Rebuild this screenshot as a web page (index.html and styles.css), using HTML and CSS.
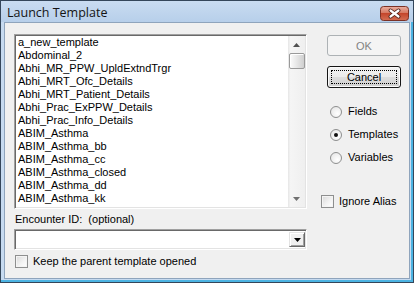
FILE: index.html
```html
<!DOCTYPE html>
<html lang="en">
<head>
  <meta charset="UTF-8" />
  <title>Launch Template</title>
  <link rel="stylesheet" href="styles.css">
</head>
<body>
  <div class="window">
    <div class="titlebar">
      <span class="title">Launch Template</span>
      <span class="close">
        <svg width="29" height="15" viewBox="0 0 29 15">
          <defs>
            <linearGradient id="closeGrad" x1="0" y1="0" x2="0" y2="1">
              <stop offset="0" stop-color="#eab0a2"/>
              <stop offset="0.45" stop-color="#d67a63"/>
              <stop offset="0.5" stop-color="#c4462c"/>
              <stop offset="1" stop-color="#d47055"/>
            </linearGradient>
          </defs>
          <rect x="0.5" y="0.5" width="28" height="14" rx="3" fill="url(#closeGrad)" stroke="#7b3226"/>
          <path d="M10.5 4.5 L18.5 10.5 M18.5 4.5 L10.5 10.5" stroke="#4a1e16" stroke-width="4" stroke-linecap="round"/>
          <path d="M10.5 4.5 L18.5 10.5 M18.5 4.5 L10.5 10.5" stroke="#fff" stroke-width="2.2" stroke-linecap="round"/>
        </svg>
      </span>
    </div>
    <div class="client">
      <div class="left-col">
        <div class="listbox">
          <ul class="items">
            <li>a_new_template</li>
            <li>Abdominal_2</li>
            <li>Abhi_MR_PPW_UpldExtndTrgr</li>
            <li>Abhi_MRT_Ofc_Details</li>
            <li>Abhi_MRT_Patient_Details</li>
            <li>Abhi_Prac_ExPPW_Details</li>
            <li>Abhi_Prac_Info_Details</li>
            <li>ABIM_Asthma</li>
            <li>ABIM_Asthma_bb</li>
            <li>ABIM_Asthma_cc</li>
            <li>ABIM_Asthma_closed</li>
            <li>ABIM_Asthma_dd</li>
            <li>ABIM_Asthma_kk</li>
            <li>ABIM_Asthma_zz</li>
          </ul>
          <div class="scrollbar">
            <div class="sb-btn">
              <svg width="7" height="4" viewBox="0 0 7 4"><polygon points="3.5,0 7,4 0,4" fill="#505050"/></svg>
            </div>
            <div class="sb-thumb"></div>
            <div class="sb-track"></div>
            <div class="sb-btn">
              <svg width="7" height="4" viewBox="0 0 7 4"><polygon points="0,0 7,0 3.5,4" fill="#707070"/></svg>
            </div>
          </div>
        </div>
        <div class="field-label">Encounter ID:&nbsp; (optional)</div>
        <div class="combo">
          <span class="combo-btn">
            <svg width="7" height="4" viewBox="0 0 7 4"><polygon points="0,0 7,0 3.5,4" fill="#000"/></svg>
          </span>
        </div>
        <div class="check keep">
          <span class="box"></span>
          <span>Keep the parent template opened</span>
        </div>
      </div>
      <div class="right-col">
        <div class="btn ok">OK</div>
        <div class="btn cancel"><span class="focus">Cancel</span></div>
        <div class="radios">
          <div class="radio"><span class="dot"></span><span>Fields</span></div>
          <div class="radio checked"><span class="dot"></span><span>Templates</span></div>
          <div class="radio"><span class="dot"></span><span>Variables</span></div>
        </div>
        <div class="check ignore">
          <span class="box"></span>
          <span>Ignore Alias</span>
        </div>
      </div>
    </div>
  </div>
</body>
</html>
```

FILE: styles.css
```css
body {
  margin: 0;
  font-family: 'Liberation Sans', Arial, sans-serif;
  font-size: 11px;
  color: #000;
  background: #fff;
}

.window {
  width: 414px;
  height: 283px;
  box-sizing: border-box;
  border: 1px solid #34465a;
  background: #c6daf0;
  box-shadow: inset -2px -2px 0 #4cb3e2;
  display: flex;
  flex-direction: column;
  padding: 0 3px 3px 3px;
}

.titlebar {
  height: 21px;
  margin: 0 -3px;
  padding: 0 4px 0 6px;
  display: flex;
  align-items: center;
  justify-content: space-between;
  background: linear-gradient(#c9dcf1, #b7cfea);
}

.title {
  font-family: 'Open Sans', 'Liberation Sans', sans-serif;
  font-size: 12.5px;
  color: #141414;
  padding-top: 1px;
}

.close {
  display: flex;
  margin-top: 3px;
  margin-right: 0;
}

.client {
  flex: 1;
  display: flex;
  background: #f0f0f0;
  border: 1px solid #8fa4bc;
}

.left-col {
  width: 293px;
  padding: 11px 0 0 9px;
  display: flex;
  flex-direction: column;
}

.listbox {
  height: 175px;
  box-sizing: border-box;
  border: 1px solid;
  border-color: #a0a0a0 #fff #fff #a0a0a0;
  box-shadow: inset 1px 1px 0 #696969, inset -1px -1px 0 #e3e3e3;
  background: #fff;
  display: flex;
  padding: 1px;
  overflow: hidden;
}

.items {
  flex: 1;
  list-style: none;
  margin: 0;
  padding: 0 0 0 2px;
  overflow: hidden;
}

.items li {
  height: 13px;
  line-height: 13px;
  white-space: nowrap;
}

.scrollbar {
  width: 17px;
  display: flex;
  flex-direction: column;
  background: linear-gradient(to right, #e6e6e6, #f5f5f5 15%, #efefef);
}

.sb-btn {
  height: 17px;
  display: flex;
  align-items: center;
  justify-content: center;
}

.sb-thumb {
  height: 16px;
  margin: 0 0 0 1px;
  box-sizing: border-box;
  border: 1px solid #9a9a9a;
  border-radius: 2px;
  background: linear-gradient(to right, #fcfcfc, #e6e6e6 50%, #cfcfcf);
  box-shadow: inset 1px 1px 0 #fff;
}

.sb-track {
  flex: 1;
}

.field-label {
  margin: 4px 0 0 1px;
  height: 13px;
  line-height: 13px;
}

.combo {
  margin-top: 3px;
  height: 21px;
  box-sizing: border-box;
  border: 1px solid;
  border-color: #a0a0a0 #fff #fff #a0a0a0;
  box-shadow: inset 1px 1px 0 #696969, inset -1px -1px 0 #e3e3e3;
  background: #fff;
  display: flex;
  justify-content: flex-end;
  padding: 2px 1px 2px 2px;
}

.combo-btn {
  width: 16px;
  box-sizing: border-box;
  border: 1px solid;
  border-color: #e3e3e3 #696969 #696969 #e3e3e3;
  box-shadow: inset 1px 1px 0 #fff, inset -1px -1px 0 #a0a0a0;
  background: #f0f0f0;
  display: flex;
  align-items: center;
  justify-content: center;
}

.check {
  display: flex;
  align-items: center;
  gap: 5px;
  height: 13px;
  line-height: 13px;
}

.check .box {
  width: 13px;
  height: 13px;
  box-sizing: border-box;
  border: 1px solid #8e8f8f;
  background: linear-gradient(135deg, #d9d9d9, #f4f4f4 60%, #fff);
  box-shadow: inset 0 0 0 1px #f4f4f4;
}

.keep {
  margin: 5px 0 0 1px;
}

.right-col {
  margin-left: 14px;
  padding-top: 12px;
  display: flex;
  flex-direction: column;
  align-items: flex-start;
}

.btn {
  width: 74px;
  box-sizing: border-box;
  margin-left: 6px;
  display: flex;
  align-items: center;
  justify-content: center;
  border-radius: 3px;
}

.ok {
  height: 21px;
  border: 1px solid #adb2b5;
  background: #f4f4f4;
  color: #838383;
}

.cancel {
  height: 22px;
  margin-top: 10px;
  border: 1px solid #151515;
  background: linear-gradient(#f3f3f3, #ebebeb 48%, #dddddd 52%, #cfcfcf);
  box-shadow: inset 0 0 0 1px #fafafa;
  padding: 3px;
}

.cancel .focus {
  flex: 1;
  align-self: stretch;
  display: flex;
  align-items: center;
  justify-content: center;
  border: 1px dotted #000;
}

.radios {
  margin: 17px 0 0 9px;
  display: flex;
  flex-direction: column;
  gap: 10px;
}

.radio {
  display: flex;
  align-items: center;
  gap: 6px;
  height: 13px;
  line-height: 13px;
}

.radio .dot {
  width: 12px;
  height: 12px;
  box-sizing: border-box;
  border-radius: 50%;
  border: 1px solid #8e8f8f;
  background: radial-gradient(circle at 65% 65%, #fff, #e2e2e2);
  display: flex;
  align-items: center;
  justify-content: center;
}

.radio.checked .dot::after {
  content: "";
  width: 4px;
  height: 4px;
  border-radius: 50%;
  background: #111;
}

.ignore {
  margin-top: 31px;
}
```
